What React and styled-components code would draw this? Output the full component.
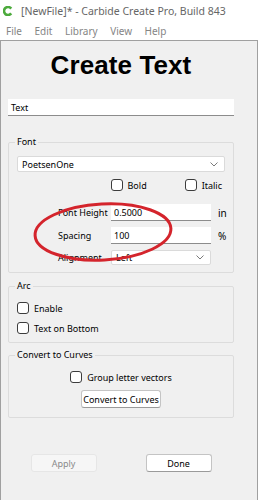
import styled, { createGlobalStyle } from "styled-components";

const GlobalStyle = createGlobalStyle`
  html, body {
    margin: 0;
    padding: 0;
    background: #fff;
  }
  body {
    font-family: "Noto Sans", "DejaVu Sans", sans-serif;
    overflow: hidden;
  }
`;

const Window = styled.div`
  position: relative;
  width: 258px;
  height: 500px;
  display: flex;
  flex-direction: column;
  overflow: hidden;
`;

const TitleBar = styled.div`
  height: 21px;
  display: flex;
  align-items: center;
  gap: 8px;
  padding-left: 3px;
  font-size: 10.5px;
  color: #666;
  white-space: nowrap;
`;

const MenuBar = styled.div`
  height: 19px;
  display: flex;
  align-items: center;
  gap: 12.5px;
  padding-left: 6px;
  font-size: 10px;
  color: #858585;
`;

const Panel = styled.div`
  flex: 1;
  display: flex;
  flex-direction: column;
  background: #f0f0f0;
  border: 1px solid #a0a0a0;
  border-bottom: none;
  padding: 0 23px 0 7px;
  font-size: 9px;
  color: #000;
`;

const Heading = styled.h1`
  margin: 9px 0 0;
  font-family: "Liberation Sans", Arial, sans-serif;
  font-weight: 700;
  font-size: 26px;
  line-height: 30px;
  text-align: center;
  letter-spacing: 0.1px;
`;

const LineEdit = styled.div`
  box-sizing: border-box;
  height: 17px;
  margin-top: ${(p) => p.$top || 0}px;
  padding-left: 3px;
  display: flex;
  align-items: center;
  background: #fff;
  border-bottom: 1px solid #8c8c8c;
  white-space: nowrap;
  overflow: hidden;
`;

const Group = styled.fieldset`
  margin: ${(p) => p.$top}px 0 0;
  padding: 0 8px ${(p) => p.$bottom}px 8px;
  border: 1px solid #dcdcdc;
  border-radius: 2px;
  min-width: 0;
  display: flex;
  flex-direction: column;
`;

const Legend = styled.legend`
  padding: 0 2px;
  margin-left: -2px;
  line-height: 14px;
`;

const Combo = styled.div`
  box-sizing: border-box;
  height: ${(p) => p.$h || 16}px;
  margin-top: ${(p) => p.$top || 0}px;
  padding: 0 6px 0 4px;
  display: flex;
  align-items: center;
  justify-content: space-between;
  background: #fff;
  border: 1px solid #dadada;
  border-radius: 2px;
`;

const Chevron = () => (
  <svg width="8" height="5" viewBox="0 0 8 5">
    <polyline points="0.5,0.5 4,4 7.5,0.5" fill="none" stroke="#7a7a7a" strokeWidth="1" />
  </svg>
);

const CheckRow = styled.div`
  display: flex;
  justify-content: ${(p) => p.$justify || "flex-start"};
  gap: ${(p) => p.$gap || 0}px;
  margin-top: ${(p) => p.$top || 0}px;
  padding-right: ${(p) => p.$right || 0}px;
  height: 12px;
  align-items: center;
`;

const Check = styled.label`
  display: flex;
  align-items: center;
  gap: 5px;
  white-space: nowrap;
`;

const Box = styled.span`
  box-sizing: border-box;
  width: 12px;
  height: 12px;
  background: #fff;
  border: 1px solid #3c3c3c;
  border-radius: 3px;
`;

const FieldRow = styled.div`
  display: grid;
  grid-template-columns: 46px 100px auto;
  column-gap: 7px;
  align-items: center;
  margin-top: ${(p) => p.$top}px;
  padding-left: 41px;
  white-space: nowrap;
`;

const Unit = styled.span`
  font-size: 10px;
`;

const PushButton = styled.button`
  box-sizing: border-box;
  width: ${(p) => p.$w}px;
  height: 18px;
  margin-top: ${(p) => p.$top || 0}px;
  padding: 0;
  font-family: inherit;
  font-size: 9px;
  white-space: nowrap;
  color: ${(p) => (p.disabled ? "#8a8a8a" : "#000")};
  background: ${(p) => (p.disabled ? "#f6f6f6" : "#fff")};
  border: 1px solid ${(p) => (p.disabled ? "#e6e6e6" : "#c4c4c4")};
  border-bottom-color: ${(p) => (p.disabled ? "#e6e6e6" : "#9a9a9a")};
  border-radius: 3px;
`;

const Centered = styled.div`
  display: flex;
  justify-content: center;
  gap: ${(p) => p.$gap || 0}px;
  margin-top: ${(p) => p.$top || 0}px;
`;

const Scribble = styled.svg`
  position: absolute;
  left: 30px;
  top: 196px;
  pointer-events: none;
`;

function CheckBox({ label }) {
  return (
    <Check>
      <Box />
      {label}
    </Check>
  );
}

export default function App() {
  return (
    <Window>
      <GlobalStyle />
      <TitleBar>
        <svg width="10" height="10" viewBox="0 0 10 10">
          <path
            d="M8.2 2.6 A4 4 0 1 0 8.2 7.4"
            fill="none"
            stroke="#4caa3c"
            strokeWidth="2.6"
          />
        </svg>
        [NewFile]* - Carbide Create Pro, Build 843
      </TitleBar>
      <MenuBar>
        <span>File</span>
        <span>Edit</span>
        <span>Library</span>
        <span>View</span>
        <span>Help</span>
      </MenuBar>
      <Panel>
        <Heading>Create Text</Heading>
        <LineEdit $top={19}>Text</LineEdit>

        <Group $top={19} $bottom={7}>
          <Legend>Font</Legend>
          <Combo $top={7}>
            PoetsenOne
            <Chevron />
          </Combo>
          <CheckRow $top={7} $justify="flex-end" $gap={38} $right={3}>
            <CheckBox label="Bold" />
            <CheckBox label="Italic" />
          </CheckRow>
          <FieldRow $top={13}>
            <span>Font Height</span>
            <LineEdit>0.5000</LineEdit>
            <Unit>in</Unit>
          </FieldRow>
          <FieldRow $top={6}>
            <span>Spacing</span>
            <LineEdit>100</LineEdit>
            <Unit>%</Unit>
          </FieldRow>
          <FieldRow $top={6}>
            <span>Alignment</span>
            <Combo $h={15}>
              Left
              <Chevron />
            </Combo>
          </FieldRow>
        </Group>

        <Group $top={6} $bottom={8}>
          <Legend>Arc</Legend>
          <CheckRow $top={9}>
            <CheckBox label="Enable" />
          </CheckRow>
          <CheckRow $top={8}>
            <CheckBox label="Text on Bottom" />
          </CheckRow>
        </Group>

        <Group $top={5} $bottom={9}>
          <Legend>Convert to Curves</Legend>
          <CheckRow $top={9} $justify="center">
            <CheckBox label="Group letter vectors" />
          </CheckRow>
          <Centered $top={7}>
            <PushButton $w={80}>Convert to Curves</PushButton>
          </Centered>
        </Group>

        <Centered $top={36} $gap={49}>
          <PushButton $w={66} disabled>
            Apply
          </PushButton>
          <PushButton $w={66}>Done</PushButton>
        </Centered>
      </Panel>

      <Scribble width="150" height="72" viewBox="0 0 150 72">
        <ellipse
          cx="73"
          cy="36"
          rx="68"
          ry="28"
          transform="rotate(-3 73 36)"
          fill="none"
          stroke="#d4242c"
          strokeWidth="3"
        />
      </Scribble>
    </Window>
  );
}
